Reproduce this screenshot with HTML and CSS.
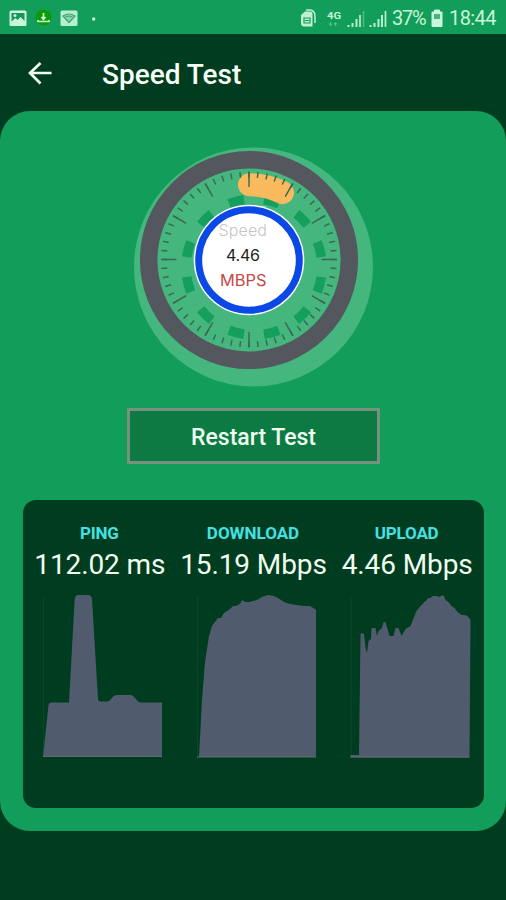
FILE: index.html
```html
<!DOCTYPE html>
<html lang="en">
<head>
<meta charset="utf-8">
<title>Speed Test</title>
<link rel="stylesheet" href="styles.css">
</head>
<body>
<div class="status">
  <svg class="status-left" width="100" height="34" viewBox="0 0 100 34">
    <rect x="9.500" y="9.500" width="17" height="15.500" rx="1.500" fill="#c9f5db"/>
    <path d="M11.500 20.500V12h13v8l-4-4-3 3-2-2z" fill="#16945a"/><circle cx="15" cy="14.500" r="1.500" fill="#c9f5db"/>
    <circle cx="43.500" cy="16.500" r="8" fill="#0b9a0b"/>
    <path d="M43.500 12v5M41.500 16l2 2.500 2-2.500M38 19v1.500h11V19" fill="none" stroke="#c9f5c9" stroke-width="1.700"/>
    <rect x="60.500" y="9.500" width="17" height="15.500" rx="1.500" fill="#b5efcf"/>
    <path d="M63 15q6-4 12 0l-6 6.500z" fill="#8fd0ac" stroke="#3fa672" stroke-width="1.200"/><path d="M65.500 16q3.500-2 7 0" fill="none" stroke="#3fa672"/>
    <circle cx="93.700" cy="18" r="1.700" fill="#c9f5db"/>
  </svg>
  <svg class="status-icons" width="88" height="34" viewBox="300 0 88 34">
    <path d="M301 14l4-3.500h5q2.500 0 2.500 2.500v12.500H304q-3 0-3-3z" fill="#c0f0d2"/><path d="M306 9h4.500q4.500 1 4.500 6v7" fill="none" stroke="#c0f0d2" stroke-width="1.500"/>
    <path d="M304 17h6v5h-6zM305 19.500h4" fill="none" stroke="#129c59" stroke-width="1.200"/>
    <text x="327" y="17.500" class="net" textLength="14" lengthAdjust="spacingAndGlyphs">4G</text>
    <path d="M330.500 21v3M329 22.500l1.500 2 1.500-2M335.500 25v-3M334 23.500l1.500-2 1.500 2" stroke="#5cc58e" fill="none"/>
    <path d="M348.500 26v-2M352.500 26v-4M356.500 26v-8M370.500 26v-2M374.500 26v-4M378.500 26v-8M382 26V14" stroke="#b5efcf" stroke-width="2"/><path d="M360 26V14M385.500 26V10" stroke="#b5efcf" stroke-width="1.700"/><path d="M363.500 26V10" stroke="#4dbd83" stroke-width="1.500"/>
  </svg>
  <span class="pct">37%</span>
  <svg class="battery" width="13" height="34" viewBox="0 0 13 34"><path d="M3.500 9h5v2h2.500v14.500H1V11h2.500z" fill="#c9f5db" stroke="#c9f5db"/><path d="M3 13h6v5H3z" fill="#43b77a"/></svg>
  <span class="clock">18:44</span>
</div>
<header class="header">
  <svg width="24" height="24" viewBox="0 0 24 24"><path d="M23.500 12H2M12.500 2L2 12l10.500 10.500" fill="none" stroke="#f4fff4" stroke-width="2.700"/></svg>
  <h1>Speed Test</h1>
</header>
<main class="panel">
  <svg class="gauge" width="240" height="240" viewBox="133 147 240 240">
    <circle cx="253.500" cy="267" r="119.500" fill="#45b67e"/>
    <circle cx="249" cy="260" r="100.300" fill="#45b67e" stroke="#54575d" stroke-width="17.500"/>
    <circle class="blocks" cx="254" cy="267" r="68" pathLength="360"/>
    <path d="M249.500 184.700A75 75 0 0 1 282.500 192.600" fill="none" stroke="#f9b95d" stroke-width="23" stroke-linecap="round"/>
    <circle class="minor" cx="249" cy="259.500" r="85" pathLength="360"/>
    <circle class="major" cx="249" cy="259.500" r="80" pathLength="360"/>
    <circle cx="249" cy="260" r="55.300" fill="#fff"/>
    <circle cx="249" cy="260" r="50.300" fill="#fff" stroke="#0b48e6" stroke-width="7"/>
    <text class="g-label" x="218.500" y="236" textLength="48.500">Speed</text>
    <text class="g-value" x="226" y="261" textLength="34">4.46</text>
    <text class="g-unit" x="220" y="286" textLength="46.500" lengthAdjust="spacingAndGlyphs">MBPS</text>
  </svg>
  <button class="restart">Restart Test</button>
  <section class="results">
    <div class="metric">
      <h2>PING</h2>
      <p>112.02 ms</p>
      <svg width="120" height="166" viewBox="43 593 120 166"><path d="M43.500 597v160" stroke="#0b4729"/><path d="M43 757L48.500 705q.3-2 2.500-2.500h18L74.700 599q.5-4 4-4H88q3.500 0 4 4L98 699q.3 2.500 2 2.500h7q2 0 4-2.500 3-4 6-4h13q3 0 6 4 2 3.500 5 3.500h21V757z" fill="#505c6d"/><path d="M43 756.500h119" stroke="#5c6c70"/></svg>
    </div>
    <div class="metric">
      <h2 class="wide">DOWNLOAD</h2>
      <p>15.19 Mbps</p>
      <svg width="120" height="166" viewBox="196 593 120 166"><path d="M197.500 597v160" stroke="#0b4729"/><path d="M197 757h2L202 700 205 662 209 636 212 626 215 622 218 618 221 618 224 613 227 611 230 609 233 606 236 606 240 604 242 600 245 602 249 602 253 601 257 600 262 597 268 595 274 596 278 598 284 602 290 604 297 605 304 606 310 606 316.500 610V757z" fill="#505c6d"/><path d="M197 757h119" stroke="#5c6c70"/></svg>
    </div>
    <div class="metric">
      <h2>UPLOAD</h2>
      <p>4.46 Mbps</p>
      <svg width="121" height="166" viewBox="350.500 593 121 166"><path d="M351.500 597v160" stroke="#0b4729"/><path d="M351 757.500V755h8.500L361 635 362 633 364.500 634 366 648 367.500 653 369 641 371.500 639 372 628H376L377.500 636 379 631 382.500 628 384 622H386L388 629 390 636H394L396 628H399L402 636 406 629 411 626 415 616 417 611 421 606 425 602 429 598 431 598 433 596H438L440 597 442 595.500H444L446 600 449 602 452 606 455 608 458 612 462 615H465L468 616 471 620 470 757.500z" fill="#505c6d"/><path d="M351 757h119" stroke="#5c6c70"/></svg>
    </div>
  </section>
</main>
</body>
</html>
```
FILE: styles.css
```css
* { box-sizing: border-box; }
body {
  margin: 0;
  height: 900px;
  background: #003c20;
  font-family: Roboto, "Liberation Sans", sans-serif;
  overflow: hidden;
}
h1, h2, p { margin: 0; font-weight: 400; }
svg { display: block; flex: none; }
.status {
  height: 34px;
  display: flex;
  align-items: center;
  background: #129e5a;
  color: #c6f6d8;
  font-size: 20px;
  line-height: 34px;
  padding-top: 1px;
}
.status-icons { margin-left: 200px; }
.pct { width: 43px; padding-left: 4px; letter-spacing: -1.3px; }
.clock { margin-left: 5px; letter-spacing: -.6px; }
.net { font-size: 9.5px; font-weight: 700; fill: #c6f6d8; }
.header {
  height: 77px;
  display: flex;
  align-items: center;
  padding: 1px 0 0 28px;
  background: #003c20;
}
.header h1 {
  margin: 2px 0 0 50px;
  color: #f6fff6;
  font-size: 28px;
  font-weight: 500;
  white-space: nowrap;
}
.panel {
  height: 720px;
  display: flex;
  flex-direction: column;
  align-items: center;
  padding-top: 36px;
  border-radius: 30px;
  background: #129e5a;
}
.gauge text { font-family: Inter, Lato, sans-serif; font-size: 16px; }
.blocks, .minor, .major { fill: none; }
.blocks { stroke: #149f5c; stroke-width: 9.5; stroke-dasharray: 13 17; stroke-dashoffset: -8.5; }
.minor { stroke: #3e6853; stroke-width: 6; stroke-dasharray: 1 5; stroke-dashoffset: .5; }
.major { stroke: #3e6853; stroke-width: 15; stroke-dasharray: 1.1 28.9; stroke-dashoffset: .55; }
.gauge .g-label { fill: #c6c6c6; font-weight: 300; }
.gauge .g-value { fill: #222; font-weight: 400; }
.gauge .g-unit { fill: #c54a42; font-size: 15.5px; }
.restart {
  width: 253px;
  height: 56px;
  margin-top: 21px;
  border: 3px solid #76917f;
  background: #0d7a43;
  color: #effff1;
  font: 500 23px Roboto, sans-serif;
  padding: 2px 0 0 1px;
}
.results {
  width: 461px;
  height: 308px;
  margin-top: 36px;
  padding-top: 22px;
  display: grid;
  grid-template-columns: repeat(3, 1fr);
  border-radius: 13px;
  background: #003c20;
}
.metric { display: flex; flex-direction: column; align-items: center; }
.metric h2 { color: #46e0e3; font-size: 17px; line-height: 22px; font-weight: 700; letter-spacing: -.2px; }
.metric .wide { letter-spacing: 0; }
.metric p { margin: 1px 0 0 1px; color: #f3fff0; font-size: 28px; line-height: 40px; letter-spacing: -.1px; white-space: nowrap; }
.metric svg { margin: 8px 0 0 7px; }
.metric:last-child svg { margin-left: 8px; }
```
